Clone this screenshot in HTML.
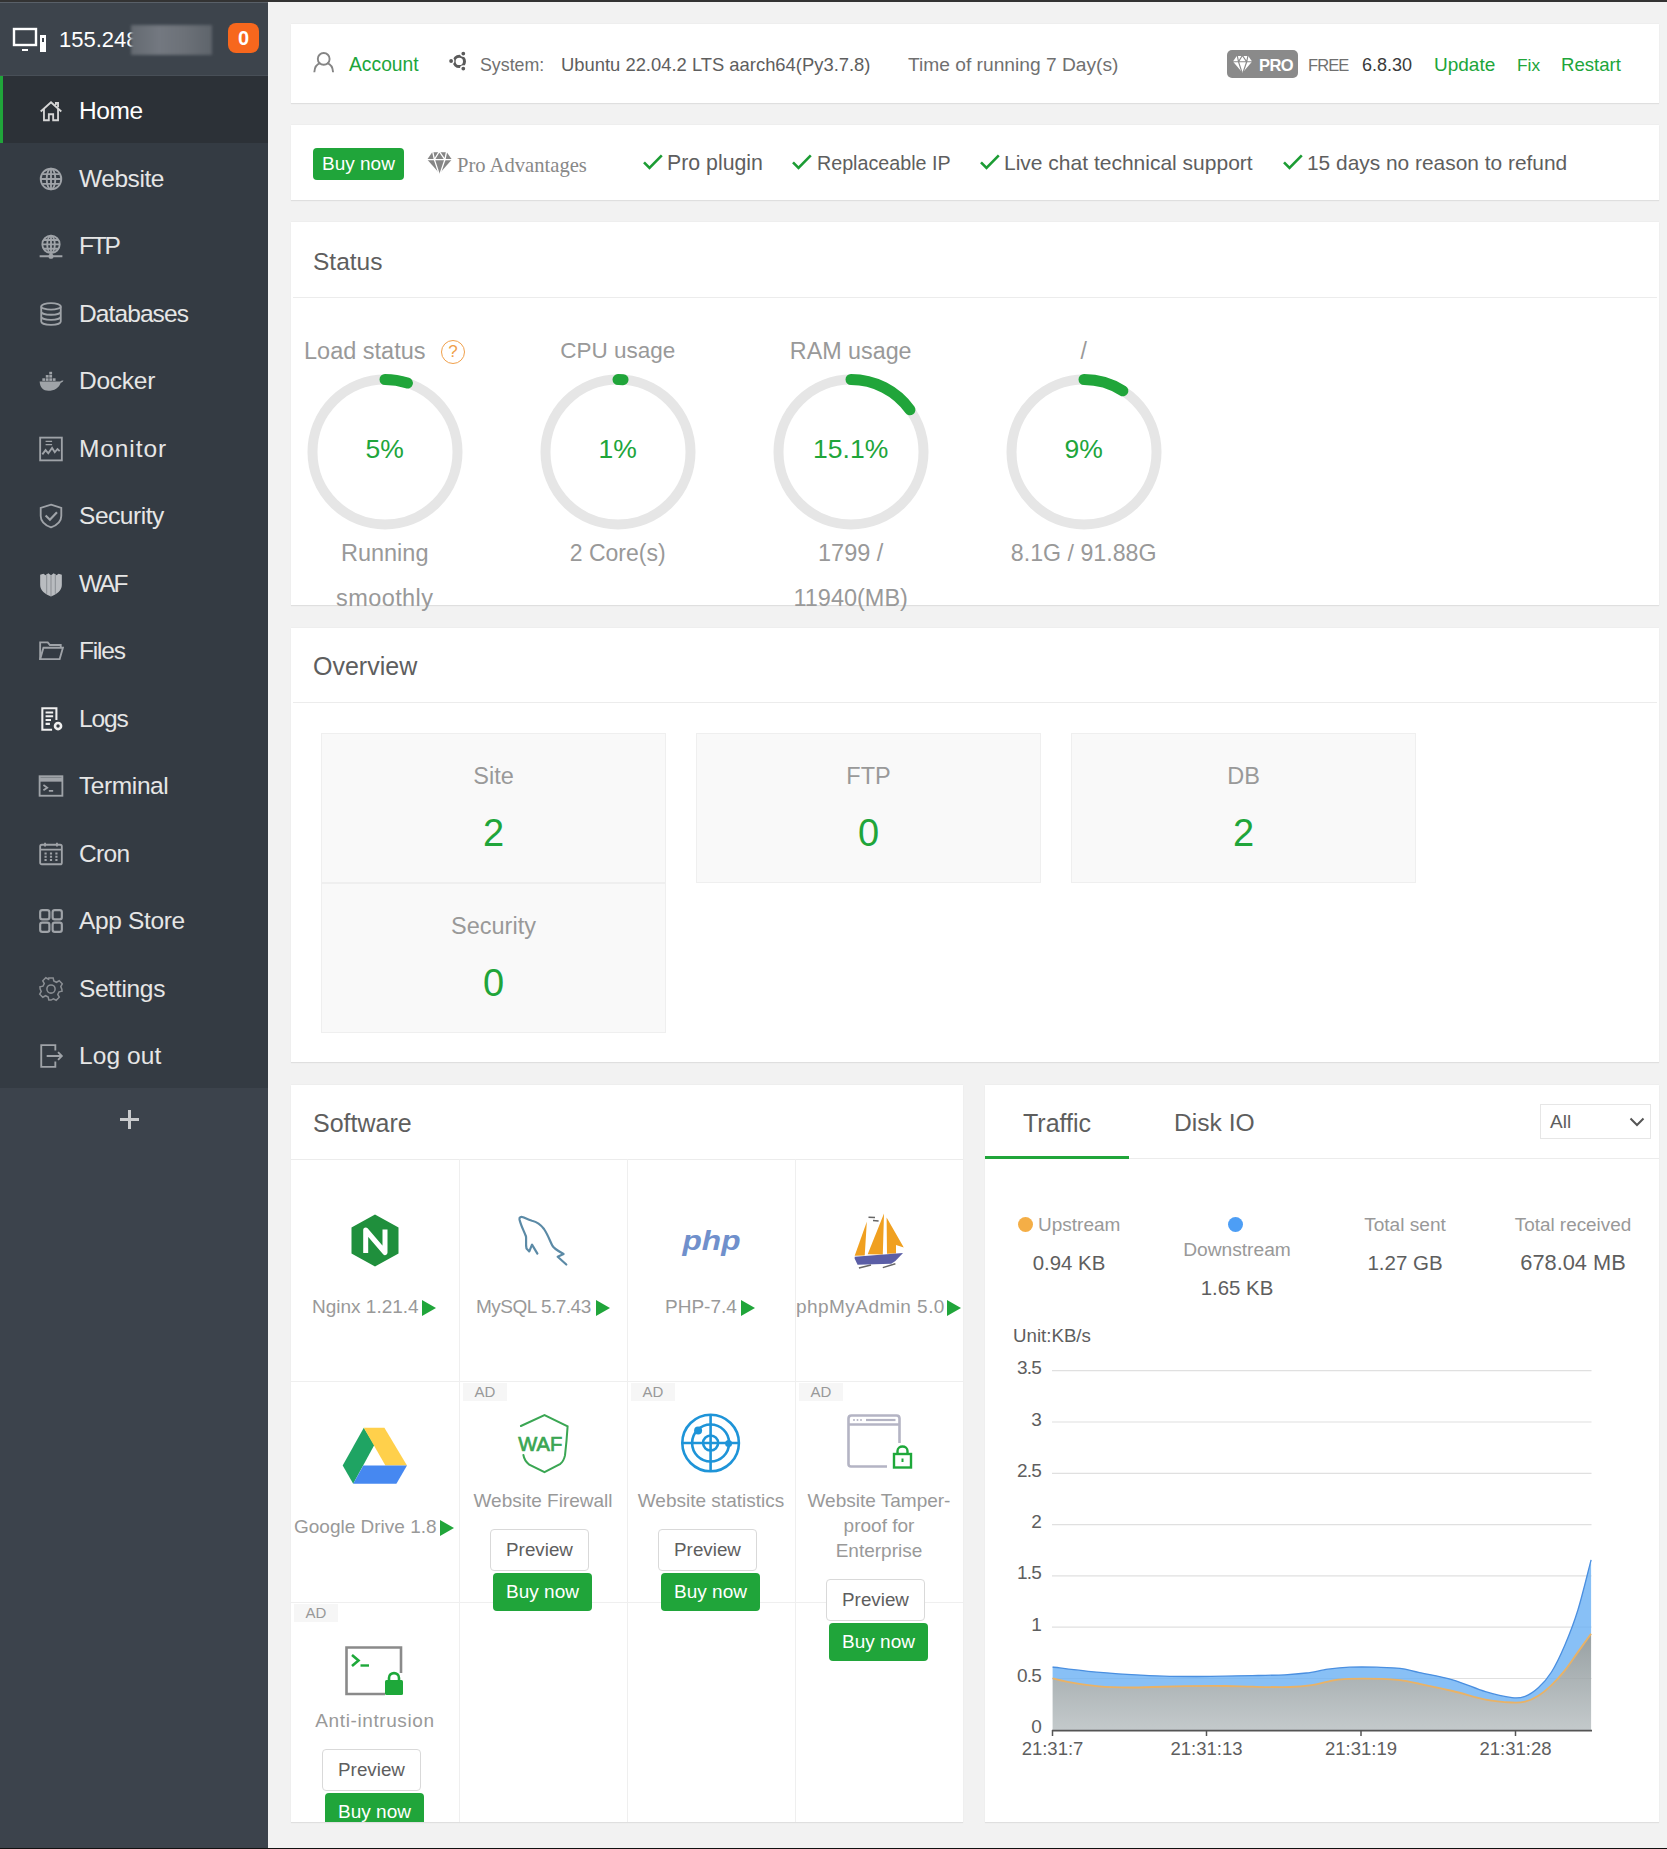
<!DOCTYPE html>
<html><head><meta charset="utf-8">
<style>
*{margin:0;padding:0;box-sizing:border-box}
html,body{width:1667px;height:1849px;overflow:hidden;background:#f2f2f2;font-family:"Liberation Sans",sans-serif}
.a{position:absolute}
.t{position:absolute;white-space:nowrap;line-height:30px;height:30px}
.c{text-align:center}
#topbar{left:0;top:0;width:1667px;height:2px;background:#333}
#botbar{left:0;top:1848px;width:1667px;height:1px;background:#111}
#side{left:0;top:2px;width:268px;height:1846px;background:#3c434c}
#sidehead{left:0;top:2px;width:268px;height:73px;background:#3d444c;border-top:1px solid #596068}
#menu{left:0;top:75px;width:268px;height:1013px;background:#343b43;border-top:1px solid #484f57}
.mi{position:absolute;left:0;width:268px;height:67px;color:#e6e6e6;font-size:24px}
.mi span{position:absolute;left:79px;top:20px;line-height:30px;font-size:24.5px}
.mi svg{position:absolute;left:38px;top:22px;width:26px;height:26px;fill:none;stroke:#9fa3a8;stroke-width:1.7}
.mi.cur{background:#2c3137;color:#fff}
.mi.cur svg{stroke:#d6d6d6}
.mi.cur:before{content:"";position:absolute;left:0;top:0;width:3px;height:67px;background:#20a53a}
.card{position:absolute;background:#fff;box-shadow:0 1px 1px rgba(0,0,0,.08),0 -1px 0 rgba(0,0,0,.015)}
.g{color:#20a53a}
.sep{position:absolute;height:1px;background:#ececec}
</style></head><body>
<div id="topbar" class="a"></div>
<div id="side" class="a"></div>
<div id="sidehead" class="a"></div>
<div id="menu" class="a"></div>
<div id="botbar" class="a"></div>

<!-- sidebar header -->
<svg class="a" style="left:12px;top:27px" width="36" height="27" viewBox="0 0 36 27" fill="none" stroke="#fff" stroke-width="2.4">
<rect x="2" y="2" width="22" height="16"/><rect x="10" y="22" width="6" height="2" fill="#fff" stroke="none"/>
<rect x="28" y="8" width="6" height="17" fill="#fff" stroke="none"/><rect x="30" y="11" width="2" height="4" fill="#3d444c" stroke="none"/>
</svg>
<div class="t" style="left:59px;top:25px;font-size:22px;color:#fff">155.248</div>
<div class="a" style="left:131px;top:25px;width:81px;height:30px;background:linear-gradient(90deg,#646a71,#737880 35%,#6c7178 65%,#5e646b);filter:blur(1.5px)"></div>
<div class="a" style="left:228px;top:23px;width:31px;height:30px;background:#f7671d;border-radius:8px;color:#fff;font-size:20px;font-weight:bold;text-align:center;line-height:30px">0</div>

<!-- menu -->
<div class="mi cur" style="top:76px"><svg viewBox="0 0 24 24"><path d="M2.5 12.5 L12 4 L21.5 12.5"/><path d="M5.5 10 V20.5 H10 V15 H14 V20.5 H18.5 V10"/><path d="M16.5 6.5 V4.5 H18.5 V8.5"/></svg><span style="letter-spacing:-0.4px">Home</span></div>
<div class="mi" style="top:144px"><svg viewBox="0 0 24 24"><circle cx="12" cy="12" r="9.5"/><ellipse cx="12" cy="12" rx="4" ry="9.5"/><path d="M12 2.5V21.5M2.5 12H21.5M4 7.5H20M4 16.5H20"/></svg><span style="letter-spacing:-0.45px">Website</span></div>
<div class="mi" style="top:211px"><svg viewBox="0 0 24 24"><circle cx="12" cy="10.5" r="8"/><ellipse cx="12" cy="10.5" rx="3.5" ry="8"/><path d="M12 2.5V18.5M4 10.5H20M5 6.5H19M5 14.5H19M1.5 21.5H22.5"/><circle cx="12" cy="21.5" r="1.5" fill="#9fa3a8"/></svg><span style="letter-spacing:-2.2px">FTP</span></div>
<div class="mi" style="top:279px"><svg viewBox="0 0 24 24"><ellipse cx="12" cy="5" rx="9" ry="3"/><path d="M3 5V19C3 20.7 7 22 12 22S21 20.7 21 19V5M3 9.7C3 11.4 7 12.7 12 12.7S21 11.4 21 9.7M3 14.4C3 16.1 7 17.4 12 17.4S21 16.1 21 14.4"/></svg><span style="letter-spacing:-0.9px">Databases</span></div>
<div class="mi" style="top:346px"><svg viewBox="0 0 24 24" style="stroke:none;fill:#9fa3a8"><path d="M1.5 12.5H20.5C21.5 11.5 22.5 11.2 23.5 11.6C23 13 22 13.5 21 13.6C19.5 18.5 15 21 9.5 21C5 21 2 18.5 1.5 12.5Z"/><rect x="4" y="9.5" width="2.6" height="2.4"/><rect x="7.2" y="9.5" width="2.6" height="2.4"/><rect x="10.4" y="9.5" width="2.6" height="2.4"/><rect x="13.6" y="9.5" width="2.6" height="2.4"/><rect x="7.2" y="6.5" width="2.6" height="2.4"/><rect x="10.4" y="6.5" width="2.6" height="2.4"/><rect x="10.4" y="3.5" width="2.6" height="2.4"/></svg><span style="letter-spacing:-0.25px">Docker</span></div>
<div class="mi" style="top:414px"><svg viewBox="0 0 24 24"><rect x="2" y="1.5" width="20" height="21"/><path d="M4 17L7 13L9.5 16L13 11L15.5 15L18 12L20 14"/><path d="M7 5H13M7 8H13" stroke-width="1.2"/></svg><span style="letter-spacing:0.9px">Monitor</span></div>
<div class="mi" style="top:481px"><svg viewBox="0 0 24 24"><path d="M12 1.5L21.5 4.5V12C21.5 17 17.5 20.5 12 22.5C6.5 20.5 2.5 17 2.5 12V4.5Z"/><path d="M7 11.5L11 15.5L17.5 8.5" stroke-width="2"/></svg><span style="letter-spacing:-0.45px">Security</span></div>
<div class="mi" style="top:549px"><svg viewBox="0 0 24 24" style="stroke:none;fill:#b9bcc0"><path d="M2 3.5L5 2.5L7 4L9.5 2L12 4L14.5 2L17 4L19 2.5L22 3.5V13C22 18 17.5 21.5 12 23.5C6.5 21.5 2 18 2 13Z"/><path d="M8 3V21M12 4V23M16 3V21" stroke="#8e9297" stroke-width="1"/></svg><span style="letter-spacing:-2px">WAF</span></div>
<div class="mi" style="top:616px"><svg viewBox="0 0 24 24"><path d="M2 19.5V4H9L11 6.5H21V9"/><path d="M2 19.5L5 9H23L20 19.5Z"/></svg><span style="letter-spacing:-1.2px">Files</span></div>
<div class="mi" style="top:684px" ><svg viewBox="0 0 24 24" style="stroke:#f0f0f0;stroke-width:1.9"><path d="M17 13V2H4V22H13"/><path d="M7 6H14M7 9.5H14M7 13H12M7 16.5H11"/><circle cx="18.5" cy="18.5" r="2.8" stroke-width="2.4"/></svg><span style="letter-spacing:-1.1px">Logs</span></div>
<div class="mi" style="top:751px"><svg viewBox="0 0 24 24"><rect x="1.5" y="3" width="21" height="18"/><path d="M1.5 6H22.5" stroke-width="4"/><path d="M5 11L8.5 13.5L5 16M10 16.5H14"/></svg><span style="letter-spacing:-0.4px">Terminal</span></div>
<div class="mi" style="top:819px"><svg viewBox="0 0 24 24"><rect x="2" y="3.5" width="20" height="18" rx="1.5"/><path d="M2 8H22M6.5 1.5V5M17.5 1.5V5M6 11.5H8M11 11.5H13M16 11.5H18M6 14.5H8M11 14.5H13M16 14.5H18M6 17.5H8M11 17.5H13M16 17.5H18"/></svg><span style="letter-spacing:-0.7px">Cron</span></div>
<div class="mi" style="top:886px"><svg viewBox="0 0 24 24" style="stroke-width:2"><rect x="2" y="2" width="8.5" height="8.5" rx="2"/><rect x="13.5" y="2" width="8.5" height="8.5" rx="2"/><rect x="2" y="13.5" width="8.5" height="8.5" rx="2"/><rect x="13.5" y="13.5" width="8.5" height="8.5" rx="2"/></svg><span style="letter-spacing:-0.35px">App Store</span></div>
<div class="mi" style="top:954px"><svg viewBox="0 0 24 24" style="stroke:#8a8e93;stroke-width:1.4"><path d="M10 1.8H14L14.6 4.6L17 5.8L19.6 4.4L22.4 7.2L21 9.8L22 12.2L22.2 14L19.4 14.6L18.2 17L19.6 19.6L16.8 22.4L14.2 21L12 22.2L10 22.2L9.4 19.4L7 18.2L4.4 19.6L1.6 16.8L3 14.2L2 12L1.8 10L4.6 9.4L5.8 7L4.4 4.4L7.2 1.6L9.8 3Z"/><circle cx="12" cy="12" r="3.8"/></svg><span style="letter-spacing:-0.3px">Settings</span></div>
<div class="mi" style="top:1021px"><svg viewBox="0 0 24 24"><path d="M16 7V2H3V22H16V17"/><path d="M8 12H22M18.5 8.5L22 12L18.5 15.5"/></svg><span style="letter-spacing:0.1px">Log out</span></div>
<div class="a" style="left:128px;top:1110px;width:3px;height:19px;background:#c9cbcd"></div>
<div class="a" style="left:120px;top:1118px;width:19px;height:3px;background:#c9cbcd"></div>

<!-- cards -->
<div class="card" style="left:291px;top:24px;width:1368px;height:79px"></div>
<div class="card" style="left:291px;top:125px;width:1368px;height:75px"></div>
<div class="card" style="left:291px;top:222px;width:1368px;height:383px"></div>
<div class="card" style="left:291px;top:628px;width:1368px;height:434px"></div>
<div class="card" style="left:291px;top:1085px;width:672px;height:737px"></div>
<div class="card" style="left:985px;top:1085px;width:674px;height:737px"></div>

<!-- header card -->
<svg class="a" style="left:313px;top:52px" width="22" height="22" viewBox="0 0 22 22" fill="none" stroke="#858585" stroke-width="1.9"><circle cx="10.7" cy="6.9" r="5.9"/><path d="M1.3 20.3C1.6 15.5 4.2 12 7.4 11.2M20.1 20.3C19.8 15.5 17.2 12 14 11.2"/></svg>
<div class="t g" style="left:349px;top:50px;font-size:19.3px">Account</div>
<svg class="a" style="left:446px;top:50px" width="24" height="24" viewBox="0 0 24 24"><circle cx="13.3" cy="11.4" r="5.2" fill="none" stroke="#5a5a5a" stroke-width="3"/><g fill="#5a5a5a" stroke="#fff" stroke-width="1.4"><circle cx="5.1" cy="11" r="2.6"/><circle cx="17.3" cy="3.6" r="2.6"/><circle cx="17.3" cy="18.6" r="2.6"/></g></svg>
<div class="t" style="left:480px;top:50px;font-size:17.8px;color:#707070">System:</div>
<div class="t" style="left:561px;top:50px;font-size:18.4px;color:#5e5e5e">Ubuntu 22.04.2 LTS aarch64(Py3.7.8)</div>
<div class="t" style="left:908px;top:50px;font-size:19.2px;color:#707070">Time of running 7 Day(s)</div>
<div class="a" style="left:1227px;top:50px;width:71px;height:28px;background:#8a8a8a;border-radius:5px"></div>
<svg class="a" style="left:1232px;top:55px" width="21" height="18" viewBox="0 0 27 23" fill="#fff"><path d="M1.2 8.4L6.2 1.2H20.8L25.9 8.4L13.5 22.6Z"/><path d="M0.5 8.6H26.5M6.7 0.5L8.4 8.6L13.3 0.5L18.9 8.6L20.6 0.5M8.4 8.6L12.9 22.5M18.9 8.6L14.2 22.5" stroke="#8a8a8a" stroke-width="1.5" fill="none"/></svg>
<div class="t" style="left:1259px;top:50px;font-size:16.5px;font-weight:bold;color:#fff;letter-spacing:-0.6px">PRO</div>
<div class="t" style="left:1308px;top:50px;font-size:16.5px;color:#707070;letter-spacing:-0.9px">FREE</div>
<div class="t" style="left:1362px;top:50px;font-size:18px;color:#3a3a3a">6.8.30</div>
<div class="t g" style="left:1434px;top:50px;font-size:19px">Update</div>
<div class="t g" style="left:1517px;top:50px;font-size:17.3px">Fix</div>
<div class="t g" style="left:1561px;top:50px;font-size:18.6px">Restart</div>

<!-- buy bar -->
<div class="a" style="left:313px;top:148px;width:91px;height:32px;background:#20a53a;border-radius:4px"></div>
<div class="t" style="left:322px;top:149px;font-size:19px;color:#fff">Buy now</div>
<svg class="a" style="left:426px;top:151px" width="27" height="23" viewBox="0 0 27 23" fill="#858585"><path d="M1.2 8.4L6.2 1.2H20.8L25.9 8.4L13.5 22.6Z"/><path d="M0.5 8.6H26.5M6.7 0.5L8.4 8.6L13.3 0.5L18.9 8.6L20.6 0.5M8.4 8.6L12.9 22.5M18.9 8.6L14.2 22.5" stroke="#fff" stroke-width="1.3" fill="none"/></svg>
<div class="t" style="left:457px;top:150px;font-family:'Liberation Serif',serif;font-size:20.6px;color:#888">Pro Advantages</div>
<svg class="a" style="left:643px;top:153px" width="20" height="17" viewBox="0 0 20 17" fill="none" stroke="#1c9c34" stroke-width="2.6"><path d="M1 9.3L6.5 14.9L18.8 2.4"/></svg>
<div class="t" style="left:667px;top:148px;font-size:21.3px;color:#5e5e5e">Pro plugin</div>
<svg class="a" style="left:792px;top:153px" width="20" height="17" viewBox="0 0 20 17" fill="none" stroke="#1c9c34" stroke-width="2.6"><path d="M1 9.3L6.5 14.9L18.8 2.4"/></svg>
<div class="t" style="left:817px;top:148px;font-size:19.7px;color:#5e5e5e">Replaceable IP</div>
<svg class="a" style="left:980px;top:153px" width="20" height="17" viewBox="0 0 20 17" fill="none" stroke="#1c9c34" stroke-width="2.6"><path d="M1 9.3L6.5 14.9L18.8 2.4"/></svg>
<div class="t" style="left:1004px;top:148px;font-size:21px;color:#5e5e5e">Live chat technical support</div>
<svg class="a" style="left:1283px;top:153px" width="20" height="17" viewBox="0 0 20 17" fill="none" stroke="#1c9c34" stroke-width="2.6"><path d="M1 9.3L6.5 14.9L18.8 2.4"/></svg>
<div class="t" style="left:1307px;top:148px;font-size:20.9px;color:#5e5e5e">15 days no reason to refund</div>

<!-- status -->
<div class="t" style="left:313px;top:247px;font-size:24.5px;color:#5e5e5e">Status</div>
<div class="sep" style="left:293px;top:297px;width:1364px"></div>
<svg class="a" style="left:304.7px;top:371.5px" width="160" height="160"><circle cx="80" cy="80" r="72.5" stroke="#e6e6e6" stroke-width="10" fill="none"/><path d="M80.00 7.50 A72.5 72.5 0 0 1 102.40 11.05" stroke="#20a53a" stroke-width="11" stroke-linecap="round" fill="none"/></svg>
<div class="t c g" style="left:304.7px;top:434px;width:160px;font-size:26.5px">5%</div>
<svg class="a" style="left:537.7px;top:371.5px" width="160" height="160"><circle cx="80" cy="80" r="72.5" stroke="#e6e6e6" stroke-width="10" fill="none"/><path d="M80.00 7.50 A72.5 72.5 0 0 1 85.05 7.64" stroke="#20a53a" stroke-width="11" stroke-linecap="round" fill="none"/></svg>
<div class="t c g" style="left:537.7px;top:434px;width:160px;font-size:26.5px">1%</div>
<svg class="a" style="left:770.7px;top:371.5px" width="160" height="160"><circle cx="80" cy="80" r="72.5" stroke="#e6e6e6" stroke-width="10" fill="none"/><path d="M80.00 7.50 A72.5 72.5 0 0 1 138.92 37.75" stroke="#20a53a" stroke-width="11" stroke-linecap="round" fill="none"/></svg>
<div class="t c g" style="left:770.7px;top:434px;width:160px;font-size:26.5px">15.1%</div>
<svg class="a" style="left:1003.7px;top:371.5px" width="160" height="160"><circle cx="80" cy="80" r="72.5" stroke="#e6e6e6" stroke-width="10" fill="none"/><path d="M80.00 7.50 A72.5 72.5 0 0 1 118.85 18.79" stroke="#20a53a" stroke-width="11" stroke-linecap="round" fill="none"/></svg>
<div class="t c g" style="left:1003.7px;top:434px;width:160px;font-size:26.5px">9%</div>
<div class="t" style="left:304px;top:336px;font-size:23.5px;color:#999">Load status</div>
<div class="a" style="left:441px;top:340px;width:24px;height:24px;border:1.6px solid #f0a04b;border-radius:50%;color:#f0a04b;font-size:17px;line-height:21px;text-align:center">?</div>
<div class="t c" style="left:517.7px;top:336px;width:200px;font-size:22.5px;color:#999">CPU usage</div>
<div class="t c" style="left:750.7px;top:336px;width:200px;font-size:23.3px;color:#999">RAM usage</div>
<div class="t c" style="left:983.7px;top:336px;width:200px;font-size:23px;color:#999">/</div>
<div class="t c" style="left:284.7px;top:538px;width:200px;font-size:23.5px;color:#999">Running</div>
<div class="t c" style="left:284.7px;top:583px;width:200px;font-size:23.5px;color:#999;letter-spacing:0.4px">smoothly</div>
<div class="t c" style="left:517.7px;top:538px;width:200px;font-size:23px;color:#999">2 Core(s)</div>
<div class="t c" style="left:750.7px;top:538px;width:200px;font-size:23.5px;color:#999">1799 /</div>
<div class="t c" style="left:750.7px;top:583px;width:200px;font-size:23.5px;color:#999">11940(MB)</div>
<div class="t c" style="left:983.7px;top:538px;width:200px;font-size:23.2px;color:#999">8.1G / 91.88G</div>
<!-- overview -->
<div class="t" style="left:313px;top:651px;font-size:25px;color:#5e5e5e">Overview</div>
<div class="sep" style="left:293px;top:702px;width:1364px"></div>
<div class="a" style="left:321px;top:733px;width:345px;height:150px;background:#f9f9f9;border:1px solid #efefef"></div>
<div class="t c" style="left:321px;top:761px;width:345px;font-size:23.5px;color:#999">Site</div>
<div class="t c g" style="left:321px;top:813px;width:345px;height:40px;line-height:40px;font-size:38px">2</div>
<div class="a" style="left:696px;top:733px;width:345px;height:150px;background:#f9f9f9;border:1px solid #efefef"></div>
<div class="t c" style="left:696px;top:761px;width:345px;font-size:23.5px;color:#999">FTP</div>
<div class="t c g" style="left:696px;top:813px;width:345px;height:40px;line-height:40px;font-size:38px">0</div>
<div class="a" style="left:1071px;top:733px;width:345px;height:150px;background:#f9f9f9;border:1px solid #efefef"></div>
<div class="t c" style="left:1071px;top:761px;width:345px;font-size:23.5px;color:#999">DB</div>
<div class="t c g" style="left:1071px;top:813px;width:345px;height:40px;line-height:40px;font-size:38px">2</div>
<div class="a" style="left:321px;top:883px;width:345px;height:150px;background:#f9f9f9;border:1px solid #efefef"></div>
<div class="t c" style="left:321px;top:911px;width:345px;font-size:23.5px;color:#999">Security</div>
<div class="t c g" style="left:321px;top:963px;width:345px;height:40px;line-height:40px;font-size:38px">0</div>
<!-- software -->
<div class="t" style="left:313px;top:1108px;font-size:25px;color:#5e5e5e">Software</div>
<div class="sep" style="left:291px;top:1159px;width:672px"></div>
<div class="a" style="left:459px;top:1159px;width:1px;height:663px;background:#efefef"></div>
<div class="a" style="left:627px;top:1159px;width:1px;height:663px;background:#efefef"></div>
<div class="a" style="left:795px;top:1159px;width:1px;height:663px;background:#efefef"></div>
<div class="a" style="left:291px;top:1381px;width:672px;height:1px;background:#efefef"></div>
<div class="a" style="left:291px;top:1602px;width:672px;height:1px;background:#efefef"></div>
<div class="t" style="left:312px;top:1292px;font-size:19px;color:#999">Nginx 1.21.4</div>
<div class="t" style="left:476px;top:1292px;font-size:19px;color:#999;letter-spacing:-0.5px">MySQL 5.7.43</div>
<div class="t" style="left:665px;top:1292px;font-size:19px;color:#999">PHP-7.4</div>
<div class="t" style="left:796px;top:1292px;font-size:19px;color:#999;letter-spacing:0.45px">phpMyAdmin 5.0</div>
<div class="t" style="left:294px;top:1512px;font-size:19px;color:#999">Google Drive 1.8</div>
<div class="a" style="left:463px;top:1383px;width:44px;height:18px;background:#f6f6f6;color:#999;font-size:15px;line-height:17px;text-align:center">AD</div>
<div class="a" style="left:631px;top:1383px;width:44px;height:18px;background:#f6f6f6;color:#999;font-size:15px;line-height:17px;text-align:center">AD</div>
<div class="a" style="left:799px;top:1383px;width:44px;height:18px;background:#f6f6f6;color:#999;font-size:15px;line-height:17px;text-align:center">AD</div>
<div class="a" style="left:294px;top:1604px;width:44px;height:18px;background:#f6f6f6;color:#999;font-size:15px;line-height:17px;text-align:center">AD</div>
<div class="t c" style="left:459px;top:1486px;width:168px;font-size:19px;color:#999">Website Firewall</div>
<div class="t c" style="left:627px;top:1486px;width:168px;font-size:19px;color:#999">Website statistics</div>
<div class="t c" style="left:795px;top:1486px;width:168px;font-size:19px;color:#999">Website Tamper-</div>
<div class="t c" style="left:795px;top:1511px;width:168px;font-size:19px;color:#999">proof for</div>
<div class="t c" style="left:795px;top:1536px;width:168px;font-size:19px;color:#999">Enterprise</div>
<div class="t c" style="left:291px;top:1706px;width:168px;font-size:19px;color:#999;letter-spacing:0.6px">Anti-intrusion</div>
<div class="a" style="left:490px;top:1529px;width:99px;height:42px;border:1px solid #d9d9d9;border-radius:4px;background:#fff;color:#5e5e5e;font-size:18.8px;line-height:40px;text-align:center">Preview</div>
<div class="a" style="left:493px;top:1573px;width:99px;height:38px;background:#20a53a;border-radius:4px;color:#fff;font-size:19px;line-height:38px;text-align:center;overflow:hidden">Buy now</div>
<div class="a" style="left:658px;top:1529px;width:99px;height:42px;border:1px solid #d9d9d9;border-radius:4px;background:#fff;color:#5e5e5e;font-size:18.8px;line-height:40px;text-align:center">Preview</div>
<div class="a" style="left:661px;top:1573px;width:99px;height:38px;background:#20a53a;border-radius:4px;color:#fff;font-size:19px;line-height:38px;text-align:center;overflow:hidden">Buy now</div>
<div class="a" style="left:826px;top:1579px;width:99px;height:42px;border:1px solid #d9d9d9;border-radius:4px;background:#fff;color:#5e5e5e;font-size:18.8px;line-height:40px;text-align:center">Preview</div>
<div class="a" style="left:829px;top:1623px;width:99px;height:38px;background:#20a53a;border-radius:4px;color:#fff;font-size:19px;line-height:38px;text-align:center;overflow:hidden">Buy now</div>
<div class="a" style="left:291px;top:1749px;width:672px;height:73px;overflow:hidden">
<div class="a" style="left:31px;top:0px;width:99px;height:42px;border:1px solid #d9d9d9;border-radius:4px;background:#fff;color:#5e5e5e;font-size:18.8px;line-height:40px;text-align:center">Preview</div>
<div class="a" style="left:34px;top:44px;width:99px;height:38px;background:#20a53a;border-radius:4px;color:#fff;font-size:19px;line-height:38px;text-align:center">Buy now</div>
</div>
<svg class="a" style="left:0;top:0" width="1667" height="1849"><path d="M422 1300V1316L436 1308Z" fill="#20a53a"/><path d="M596 1300V1316L610 1308Z" fill="#20a53a"/><path d="M741 1300V1316L755 1308Z" fill="#20a53a"/><path d="M947 1300V1316L961 1308Z" fill="#20a53a"/><path d="M440 1520V1536L454 1528Z" fill="#20a53a"/><path d="M375 1214.5L398.5 1227.5V1253.5L375 1266.5L351.5 1253.5V1227.5Z" fill="#1f8f3c"/><path d="M365.7 1253V1230L385 1252.5V1229.5" fill="none" stroke="#fff" stroke-width="5" stroke-linejoin="round" stroke-linecap="butt"/><path d="M537.4 1253.6L532 1244.6L529.3 1251.4L526.5 1248.5C525.5 1244 526.5 1240 526 1236.5C524 1231 521 1226 519.5 1219.5C519 1217 521 1216.5 523 1217.2C526 1218.5 529 1220 532 1220.8C537 1222 541 1225 544 1229C548 1235 550 1241 552.3 1245.5C553.5 1248.5 558 1251 563.6 1254L557.7 1256.8L566.3 1264.5" fill="none" stroke="#5b8aa6" stroke-width="2.2" stroke-linejoin="round" stroke-linecap="round"/><text x="682.5" y="1249.5" font-family="Liberation Sans" font-weight="bold" font-style="italic" font-size="27.5" fill="#7090cc" textLength="58" lengthAdjust="spacingAndGlyphs">php</text><path d="M854.7 1255.8 L866.8 1221.8 L864.7 1255.4Z" fill="#f0a020"/><path d="M867.7 1254.2 L884.0 1213.4 L882.8 1254.6Z" fill="#f0a020"/><path d="M886.6 1217.6 L903.8 1247.4 L896.0 1245.0 L896.0 1253.5 L887.0 1253.7Z" fill="#f0a020"/><path d="M854.7 1256.7 L903.0 1252.9 L895.4 1260.9 L891.2 1263.8 L857.6 1264.7 L854.7 1258.8Z" fill="#5b5ea6"/><path d="M858.9 1268L871 1265M882.8 1267.6L895.4 1263.8M868.5 1217.2L875 1217.5M873 1220.5L878.6 1221" stroke="#666" stroke-width="1.5"/><path d="M363.8 1427.7 L374.3 1445.0 L353.2 1483.8 L342.7 1465.6Z" fill="#1fa463"/><path d="M363.8 1427.7 L384.4 1427.7 L407.0 1465.6 L385.4 1465.6Z" fill="#ffd04b"/><path d="M363.3 1465.6 L407.0 1465.6 L396.4 1483.8 L353.2 1483.8Z" fill="#4688f1"/><path d="M520.9 1426L544.5 1415.1L567.6 1426.4C567 1436 566 1447 565 1455.4C564 1460 562 1462.5 560.4 1463.8L544.5 1472.2L529.3 1464.7C526 1462 524 1459 523.4 1455" fill="none" stroke="#3aa653" stroke-width="2" stroke-linecap="round"/><text x="540.3" y="1450.8" text-anchor="middle" font-family="Liberation Sans" font-size="20" fill="#3aa653" stroke="#3aa653" stroke-width="0.7" textLength="44" lengthAdjust="spacingAndGlyphs">WAF</text><g fill="none" stroke="#1e94d8" stroke-width="2.6"><circle cx="710.6" cy="1443" r="28.3"/><circle cx="710.6" cy="1443" r="18.5"/><circle cx="710.6" cy="1443" r="7.5"/><path d="M710.6 1414V1472M681.6 1443H739.6"/></g><circle cx="698.1" cy="1430.5" r="4" fill="#1e94d8"/><circle cx="728.6" cy="1443.5" r="3.5" fill="#1e94d8"/><path d="M899.5 1443V1418.5C899.5 1416.5 898 1415.5 896.5 1415.5H851.5C850 1415.5 848.5 1416.5 848.5 1418.5V1464C848.5 1465.5 849.5 1466.5 851 1466.5H887" fill="none" stroke="#b4b4c4" stroke-width="2.6"/><path d="M849 1424.5H899.5" stroke="#b4b4c4" stroke-width="2.4"/><circle cx="854" cy="1420" r="1" fill="#b4b4c4"/><circle cx="857.5" cy="1420" r="1" fill="#b4b4c4"/><circle cx="861" cy="1420" r="1" fill="#b4b4c4"/><path d="M866 1420H895.5" stroke="#b4b4c4" stroke-width="2.2"/><rect x="894" y="1454" width="17" height="13.5" fill="none" stroke="#1ea83a" stroke-width="2.4"/><path d="M897.5 1454V1451C897.5 1445 907.5 1445 907.5 1451V1454" fill="none" stroke="#1ea83a" stroke-width="2.4"/><path d="M902.5 1458.5V1462" stroke="#1ea83a" stroke-width="2"/><path d="M385 1694H346.5V1647.5H401V1673" fill="none" stroke="#8a8a8a" stroke-width="2.6"/><path d="M352 1655L358.5 1660.5L352 1666" fill="none" stroke="#1ea83a" stroke-width="2.6"/><path d="M360.5 1665.5H369" stroke="#1ea83a" stroke-width="2.4"/><rect x="385" y="1680" width="18" height="15" rx="1.5" fill="#1ea83a"/><path d="M389 1680.5V1678C389 1671.5 399 1671.5 399 1678V1680.5" fill="none" stroke="#1ea83a" stroke-width="2.6"/></svg>
<!-- traffic -->
<div class="t" style="left:1023px;top:1108px;font-size:25px;color:#5e5e5e">Traffic</div>
<div class="t" style="left:1174px;top:1108px;font-size:24.6px;color:#5e5e5e">Disk IO</div>
<div class="sep" style="left:985px;top:1158px;width:674px"></div>
<div class="a" style="left:985px;top:1156px;width:144px;height:3px;background:#20a53a"></div>
<div class="a" style="left:1540px;top:1104px;width:111px;height:35px;border:1px solid #e6e6e6;background:#fff"></div>
<div class="t" style="left:1550px;top:1107px;font-size:19px;color:#5e5e5e">All</div>
<svg class="a" style="left:1629px;top:1117px" width="16" height="10" viewBox="0 0 16 10" fill="none" stroke="#555" stroke-width="2"><path d="M1.5 1.5L8 8L14.5 1.5"/></svg>
<div class="a" style="left:1018px;top:1217px;width:15px;height:15px;border-radius:50%;background:#f4ae46"></div>
<div class="t" style="left:1038px;top:1210px;font-size:19px;color:#999">Upstream</div>
<div class="t c" style="left:985px;top:1248px;width:168px;font-size:20.4px;color:#5e5e5e">0.94 KB</div>
<div class="a" style="left:1228px;top:1217px;width:15px;height:15px;border-radius:50%;background:#4d9ef5"></div>
<div class="t c" style="left:1153px;top:1235px;width:168px;font-size:19.2px;color:#999">Downstream</div>
<div class="t c" style="left:1153px;top:1273px;width:168px;font-size:20.4px;color:#5e5e5e">1.65 KB</div>
<div class="t c" style="left:1321px;top:1210px;width:168px;font-size:19.1px;color:#999">Total sent</div>
<div class="t c" style="left:1321px;top:1248px;width:168px;font-size:20.5px;color:#5e5e5e">1.27 GB</div>
<div class="t c" style="left:1489px;top:1210px;width:168px;font-size:18.9px;color:#999">Total received</div>
<div class="t c" style="left:1489px;top:1248px;width:168px;font-size:21.8px;color:#5e5e5e">678.04 MB</div>
<div class="t" style="left:1013px;top:1321px;font-size:18.7px;color:#5e5e5e">Unit:KB/s</div>
<div class="t" style="left:981px;top:1353.2px;width:60px;text-align:right;font-size:19px;color:#5e5e5e;letter-spacing:-0.8px;padding-right:0">3.5</div>
<div class="t" style="left:981px;top:1404.5px;width:60px;text-align:right;font-size:19px;color:#5e5e5e;letter-spacing:-0.8px;padding-right:0">3</div>
<div class="t" style="left:981px;top:1455.8px;width:60px;text-align:right;font-size:19px;color:#5e5e5e;letter-spacing:-0.8px;padding-right:0">2.5</div>
<div class="t" style="left:981px;top:1507.1px;width:60px;text-align:right;font-size:19px;color:#5e5e5e;letter-spacing:-0.8px;padding-right:0">2</div>
<div class="t" style="left:981px;top:1558.4px;width:60px;text-align:right;font-size:19px;color:#5e5e5e;letter-spacing:-0.8px;padding-right:0">1.5</div>
<div class="t" style="left:981px;top:1609.7px;width:60px;text-align:right;font-size:19px;color:#5e5e5e;letter-spacing:-0.8px;padding-right:0">1</div>
<div class="t" style="left:981px;top:1661.0px;width:60px;text-align:right;font-size:19px;color:#5e5e5e;letter-spacing:-0.8px;padding-right:0">0.5</div>
<div class="t" style="left:981px;top:1712.3px;width:60px;text-align:right;font-size:19px;color:#5e5e5e;letter-spacing:-0.8px;padding-right:0">0</div>
<div class="t c" style="left:992.5px;top:1734px;width:120px;font-size:18.5px;color:#5e5e5e">21:31:7</div>
<div class="t c" style="left:1146.5px;top:1734px;width:120px;font-size:18.5px;color:#5e5e5e">21:31:13</div>
<div class="t c" style="left:1301.0px;top:1734px;width:120px;font-size:18.5px;color:#5e5e5e">21:31:19</div>
<div class="t c" style="left:1455.5px;top:1734px;width:120px;font-size:18.5px;color:#5e5e5e">21:31:28</div>
<svg class="a" style="left:0;top:0" width="1667" height="1849"><path d="M1052 1678.5H1591.5" stroke="#e0e0e0" stroke-width="1.2"/><path d="M1052 1627.2H1591.5" stroke="#e0e0e0" stroke-width="1.2"/><path d="M1052 1575.9H1591.5" stroke="#e0e0e0" stroke-width="1.2"/><path d="M1052 1524.6H1591.5" stroke="#e0e0e0" stroke-width="1.2"/><path d="M1052 1473.3H1591.5" stroke="#e0e0e0" stroke-width="1.2"/><path d="M1052 1422.0H1591.5" stroke="#e0e0e0" stroke-width="1.2"/><path d="M1052 1370.7H1591.5" stroke="#e0e0e0" stroke-width="1.2"/><defs><linearGradient id="gg" x1="0" y1="0" x2="0" y2="1"><stop offset="0" stop-color="#869093"/><stop offset="1" stop-color="#b9c0c2"/></linearGradient></defs><path d="M1052.6 1678.3 C1055.8 1679.0 1064.3 1681.3 1072.0 1682.7 C1079.7 1684.1 1089.1 1685.6 1099.0 1686.4 C1108.9 1687.2 1122.4 1687.4 1131.4 1687.5 C1140.4 1687.6 1144.0 1687.2 1153.0 1687.0 C1162.0 1686.8 1173.4 1686.4 1185.4 1686.2 C1197.4 1686.0 1213.8 1685.9 1225.0 1686.0 C1236.2 1686.1 1241.5 1686.5 1252.4 1686.7 C1263.3 1686.9 1280.3 1687.3 1290.2 1687.0 C1300.1 1686.7 1305.5 1686.0 1311.8 1685.1 C1318.1 1684.2 1322.6 1682.6 1328.0 1681.6 C1333.4 1680.6 1335.2 1679.5 1344.2 1679.1 C1353.2 1678.6 1372.7 1678.7 1382.0 1678.9 C1391.3 1679.1 1393.7 1679.4 1400.0 1680.2 C1406.3 1681.0 1410.8 1682.0 1419.6 1683.8 C1428.4 1685.6 1441.6 1688.4 1452.6 1691.0 C1463.6 1693.6 1475.6 1697.7 1485.5 1699.6 C1495.4 1701.5 1505.4 1702.2 1512.0 1702.5 C1518.6 1702.8 1520.7 1702.7 1525.1 1701.6 C1529.5 1700.5 1533.9 1698.5 1538.3 1695.7 C1542.7 1693.0 1547.1 1689.3 1551.5 1685.1 C1555.9 1680.9 1560.3 1676.1 1564.7 1670.6 C1569.1 1665.1 1573.5 1658.2 1577.9 1652.1 C1582.3 1645.9 1588.9 1636.8 1591.1 1633.7 L1591.1 1730 L1052.6 1730Z" fill="url(#gg)" fill-opacity="0.85"/><path d="M1052.6 1667.0 C1058.5 1667.7 1075.1 1670.0 1088.2 1671.3 C1101.3 1672.6 1118.8 1673.8 1131.4 1674.6 C1144.0 1675.4 1153.0 1675.9 1163.8 1676.2 C1174.6 1676.5 1186.0 1676.5 1196.2 1676.5 C1206.4 1676.5 1215.6 1676.4 1225.0 1676.2 C1234.4 1676.0 1242.4 1675.8 1252.4 1675.6 C1262.4 1675.4 1275.8 1675.2 1284.8 1674.8 C1293.8 1674.4 1299.2 1673.9 1306.4 1673.0 C1313.6 1672.1 1320.8 1670.2 1328.0 1669.2 C1335.2 1668.2 1341.5 1667.5 1349.6 1667.2 C1357.7 1666.9 1368.2 1667.0 1376.6 1667.2 C1385.0 1667.4 1392.8 1667.4 1400.0 1668.3 C1407.2 1669.2 1410.8 1670.7 1419.6 1672.6 C1428.4 1674.5 1441.6 1676.6 1452.6 1679.8 C1463.6 1683.0 1475.6 1688.7 1485.5 1691.7 C1495.4 1694.7 1505.4 1696.8 1512.0 1697.6 C1518.6 1698.4 1520.7 1697.9 1525.1 1696.3 C1529.5 1694.7 1533.9 1691.8 1538.3 1687.8 C1542.7 1683.8 1547.1 1679.0 1551.5 1672.0 C1555.9 1665.0 1560.3 1655.8 1564.7 1645.5 C1569.1 1635.2 1573.5 1624.3 1577.9 1610.0 C1582.3 1595.7 1588.9 1568.2 1591.1 1559.8 L1591.1 1633.7 C1588.9 1636.8 1582.3 1645.9 1577.9 1652.1 C1573.5 1658.2 1569.1 1665.1 1564.7 1670.6 C1560.3 1676.1 1555.9 1680.9 1551.5 1685.1 C1547.1 1689.3 1542.7 1693.0 1538.3 1695.7 C1533.9 1698.5 1529.5 1700.5 1525.1 1701.6 C1520.7 1702.7 1518.6 1702.8 1512.0 1702.5 C1505.4 1702.2 1495.4 1701.5 1485.5 1699.6 C1475.6 1697.7 1463.6 1693.6 1452.6 1691.0 C1441.6 1688.4 1428.4 1685.6 1419.6 1683.8 C1410.8 1682.0 1406.3 1681.0 1400.0 1680.2 C1393.7 1679.4 1391.3 1679.1 1382.0 1678.9 C1372.7 1678.7 1353.2 1678.6 1344.2 1679.1 C1335.2 1679.5 1333.4 1680.6 1328.0 1681.6 C1322.6 1682.6 1318.1 1684.2 1311.8 1685.1 C1305.5 1686.0 1300.1 1686.7 1290.2 1687.0 C1280.3 1687.3 1263.3 1686.9 1252.4 1686.7 C1241.5 1686.5 1236.2 1686.1 1225.0 1686.0 C1213.8 1685.9 1197.4 1686.0 1185.4 1686.2 C1173.4 1686.4 1162.0 1686.8 1153.0 1687.0 C1144.0 1687.2 1140.4 1687.6 1131.4 1687.5 C1122.4 1687.4 1108.9 1687.2 1099.0 1686.4 C1089.1 1685.6 1079.7 1684.1 1072.0 1682.7 C1064.3 1681.3 1055.8 1679.0 1052.6 1678.3Z" fill="#6ab0f4" fill-opacity="0.8"/><path d="M1052.6 1667.0 C1058.5 1667.7 1075.1 1670.0 1088.2 1671.3 C1101.3 1672.6 1118.8 1673.8 1131.4 1674.6 C1144.0 1675.4 1153.0 1675.9 1163.8 1676.2 C1174.6 1676.5 1186.0 1676.5 1196.2 1676.5 C1206.4 1676.5 1215.6 1676.4 1225.0 1676.2 C1234.4 1676.0 1242.4 1675.8 1252.4 1675.6 C1262.4 1675.4 1275.8 1675.2 1284.8 1674.8 C1293.8 1674.4 1299.2 1673.9 1306.4 1673.0 C1313.6 1672.1 1320.8 1670.2 1328.0 1669.2 C1335.2 1668.2 1341.5 1667.5 1349.6 1667.2 C1357.7 1666.9 1368.2 1667.0 1376.6 1667.2 C1385.0 1667.4 1392.8 1667.4 1400.0 1668.3 C1407.2 1669.2 1410.8 1670.7 1419.6 1672.6 C1428.4 1674.5 1441.6 1676.6 1452.6 1679.8 C1463.6 1683.0 1475.6 1688.7 1485.5 1691.7 C1495.4 1694.7 1505.4 1696.8 1512.0 1697.6 C1518.6 1698.4 1520.7 1697.9 1525.1 1696.3 C1529.5 1694.7 1533.9 1691.8 1538.3 1687.8 C1542.7 1683.8 1547.1 1679.0 1551.5 1672.0 C1555.9 1665.0 1560.3 1655.8 1564.7 1645.5 C1569.1 1635.2 1573.5 1624.3 1577.9 1610.0 C1582.3 1595.7 1588.9 1568.2 1591.1 1559.8" fill="none" stroke="#4a8fe0" stroke-width="1.3"/><path d="M1052.6 1678.3 C1055.8 1679.0 1064.3 1681.3 1072.0 1682.7 C1079.7 1684.1 1089.1 1685.6 1099.0 1686.4 C1108.9 1687.2 1122.4 1687.4 1131.4 1687.5 C1140.4 1687.6 1144.0 1687.2 1153.0 1687.0 C1162.0 1686.8 1173.4 1686.4 1185.4 1686.2 C1197.4 1686.0 1213.8 1685.9 1225.0 1686.0 C1236.2 1686.1 1241.5 1686.5 1252.4 1686.7 C1263.3 1686.9 1280.3 1687.3 1290.2 1687.0 C1300.1 1686.7 1305.5 1686.0 1311.8 1685.1 C1318.1 1684.2 1322.6 1682.6 1328.0 1681.6 C1333.4 1680.6 1335.2 1679.5 1344.2 1679.1 C1353.2 1678.6 1372.7 1678.7 1382.0 1678.9 C1391.3 1679.1 1393.7 1679.4 1400.0 1680.2 C1406.3 1681.0 1410.8 1682.0 1419.6 1683.8 C1428.4 1685.6 1441.6 1688.4 1452.6 1691.0 C1463.6 1693.6 1475.6 1697.7 1485.5 1699.6 C1495.4 1701.5 1505.4 1702.2 1512.0 1702.5 C1518.6 1702.8 1520.7 1702.7 1525.1 1701.6 C1529.5 1700.5 1533.9 1698.5 1538.3 1695.7 C1542.7 1693.0 1547.1 1689.3 1551.5 1685.1 C1555.9 1680.9 1560.3 1676.1 1564.7 1670.6 C1569.1 1665.1 1573.5 1658.2 1577.9 1652.1 C1582.3 1645.9 1588.9 1636.8 1591.1 1633.7" fill="none" stroke="#e9b266" stroke-width="1.8"/><path d="M1052 1730.7H1592" stroke="#555" stroke-width="1.8"/><path d="M1052.5 1730V1736" stroke="#555" stroke-width="1.5"/><path d="M1206.5 1730V1736" stroke="#555" stroke-width="1.5"/><path d="M1361 1730V1736" stroke="#555" stroke-width="1.5"/><path d="M1515.5 1730V1736" stroke="#555" stroke-width="1.5"/></svg>
<!--CONTENT-->
</body></html>
